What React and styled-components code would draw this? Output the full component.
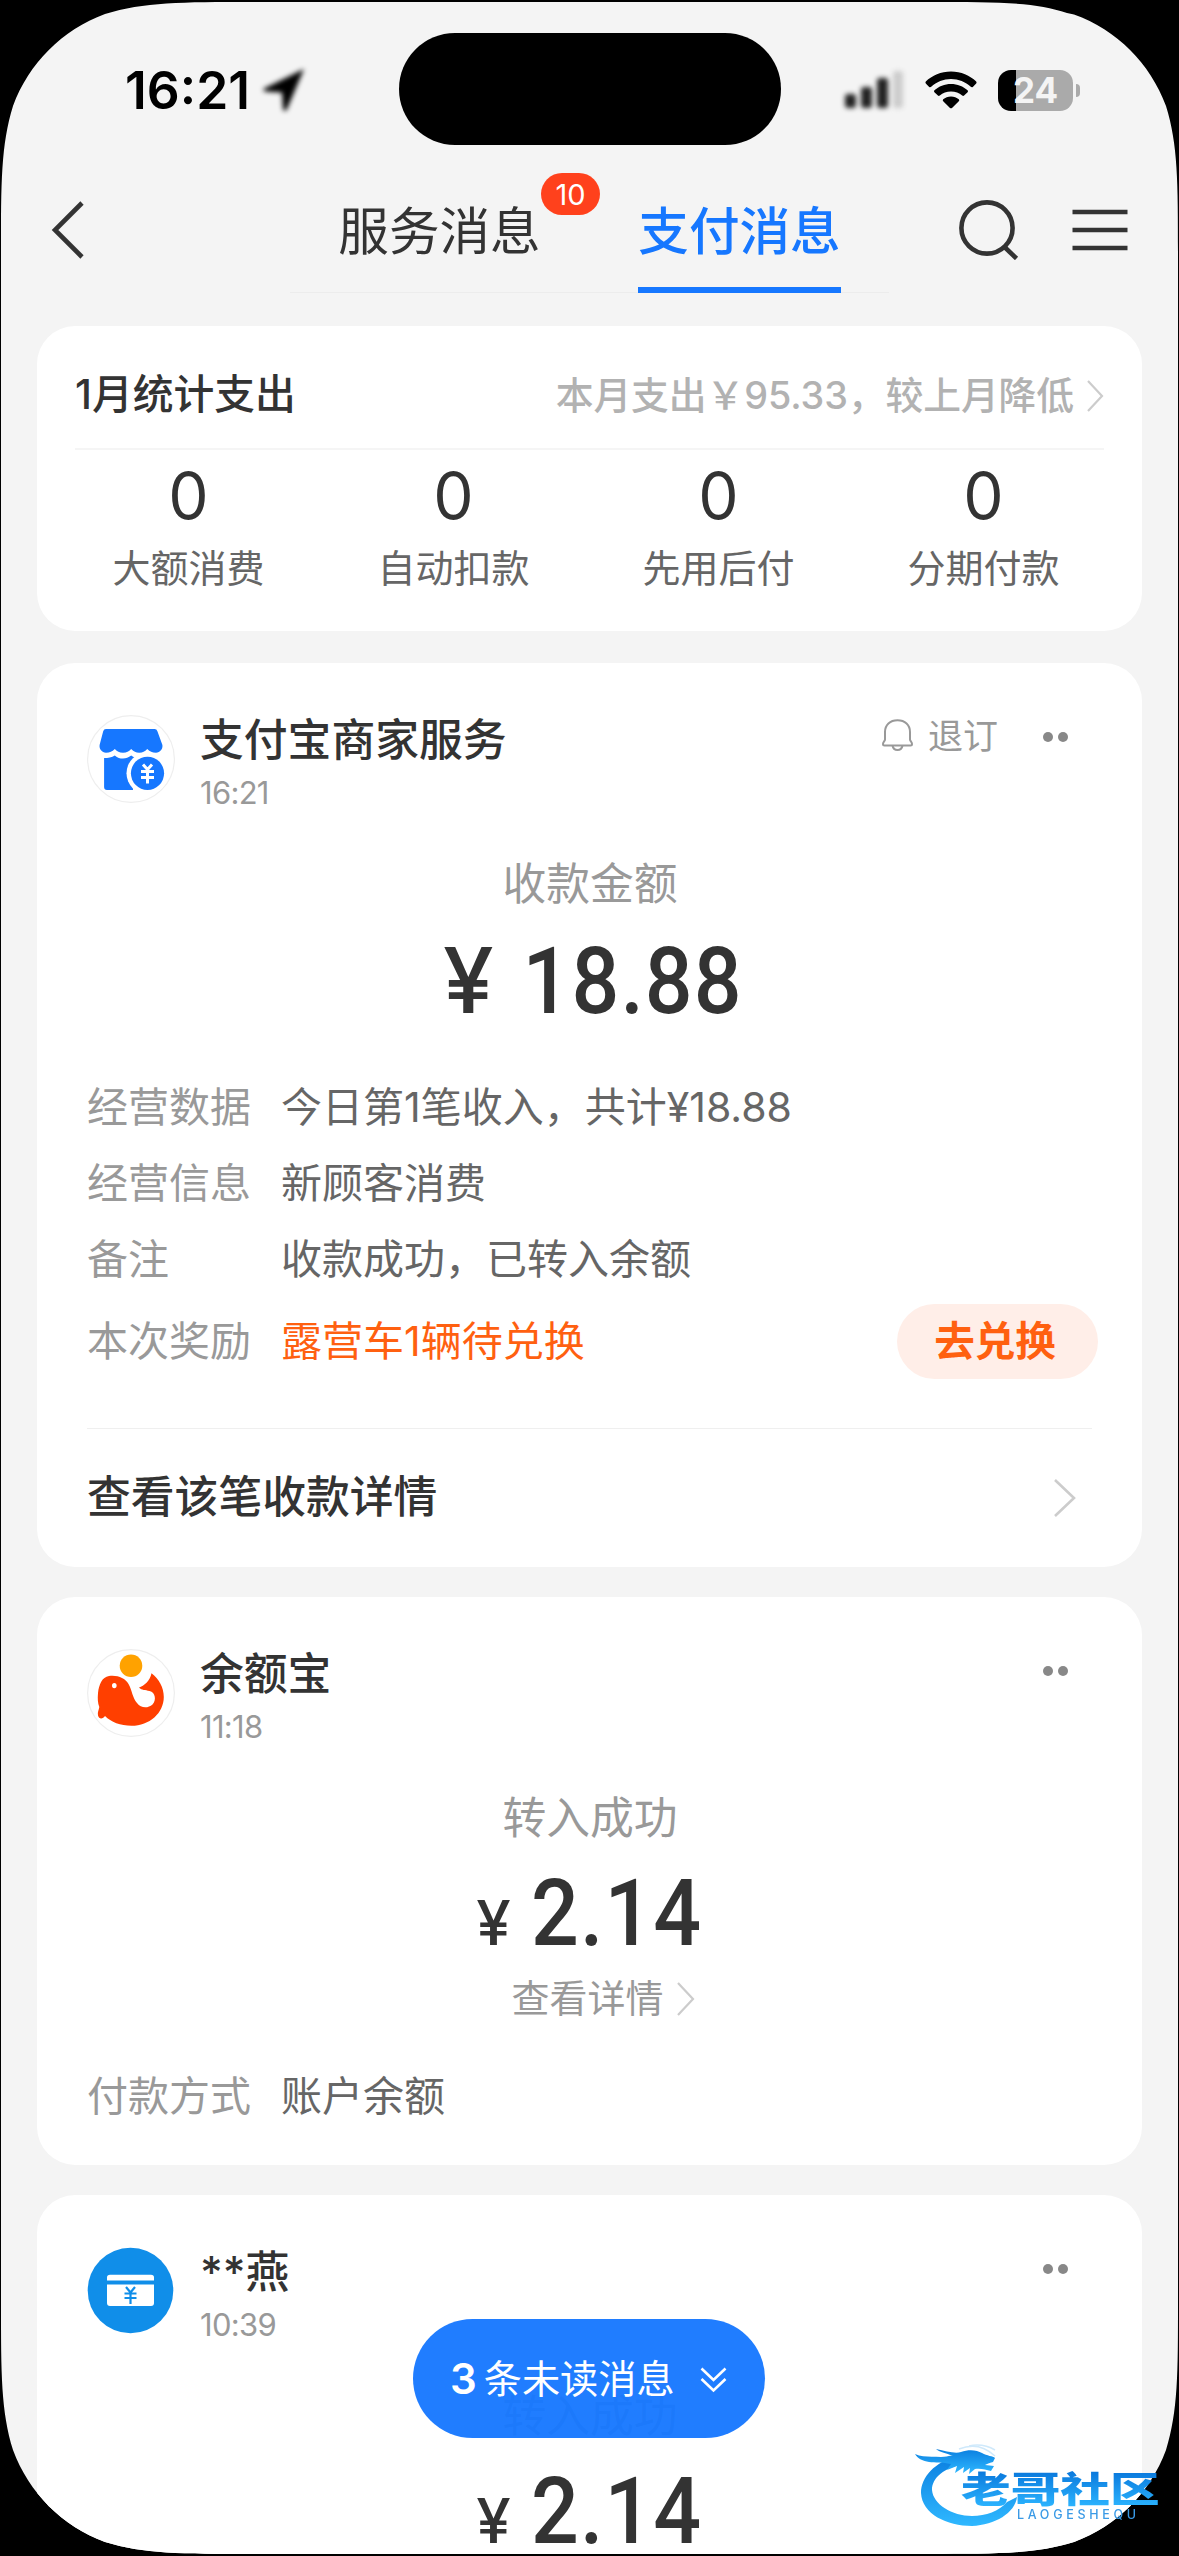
import React from "react";
import styled, { createGlobalStyle } from "styled-components";

const stats = [
  { label: "大额消费", value: 0 },
  { label: "自动扣款", value: 0 },
  { label: "先用后付", value: 0 },
  { label: "分期付款", value: 0 },
];

const App = () => {
  return (
    <Phone>
      <GlobalStyle />
      <Screen>
        <StatusBar>
          <Clock>
            16:21
            <LocationIcon />
          </Clock>
          <Island />
          <StatusIcons>
            <SignalIcon />
            <WifiIcon />
            <Battery>
              <BatteryBody>24</BatteryBody>
              <BatteryTip />
            </Battery>
          </StatusIcons>
        </StatusBar>

        <NavBar>
          <BackButton>
            <svg width="34" height="58" viewBox="0 0 34 58" fill="none">
              <path d="M31 2L4 29L31 56" stroke="#333" strokeWidth="4.6" />
            </svg>
          </BackButton>
          <Tabs>
            <Tab>
              服务消息
              <Badge>10</Badge>
            </Tab>
            <Tab $active>支付消息</Tab>
          </Tabs>
          <NavActions>
            <svg width="62" height="60" viewBox="0 0 62 60" fill="none" stroke="#333" strokeWidth="4.6">
              <circle cx="29" cy="28" r="25.6" />
              <path d="M46 46.500L58.500 58.500" />
            </svg>
            <svg width="56" height="42" viewBox="0 0 56 42" stroke="#333" strokeWidth="4.4">
              <path d="M0.500 3H55.500M0.500 21H55.500M0.500 39H55.500" />
            </svg>
          </NavActions>
        </NavBar>

        <Feed>
          <StatsCard>
            <StatsHeader>
              <StatsTitle>1月统计支出</StatsTitle>
              <StatsSummary>
                本月支出￥95.33，较上月降低
                <Chevron width={17} height={32} />
              </StatsSummary>
            </StatsHeader>
            <StatsGrid>
              {stats.map((stat) => (
                <div key={stat.label}>
                  <StatValue>{stat.value}</StatValue>
                  <StatLabel>{stat.label}</StatLabel>
                </div>
              ))}
            </StatsGrid>
          </StatsCard>

          <Card>
            <CardHeader icon={<ShopIcon />} name="支付宝商家服务" time="16:21" subscribable />
            <AmountLabel>收款金额</AmountLabel>
            <Amount $large>
              <Currency $large>¥</Currency>
              <AmountNumber>18.88</AmountNumber>
            </Amount>
            <Rows>
              <Row label="经营数据">今日第1笔收入，共计¥18.88</Row>
              <Row label="经营信息">新顾客消费</Row>
              <Row label="备注">收款成功，已转入余额</Row>
              <RewardRow>
                <RowLabel>本次奖励</RowLabel>
                <RewardText>露营车1辆待兑换</RewardText>
                <RewardButton>去兑换</RewardButton>
              </RewardRow>
            </Rows>
            <CardFooter>
              查看该笔收款详情
              <Chevron width={22} height={38} stroke={2.6} />
            </CardFooter>
          </Card>

          <Card>
            <CardHeader icon={<YuebaoIcon />} name="余额宝" time="11:18" />
            <AmountLabel>转入成功</AmountLabel>
            <Amount>
              <Currency>¥</Currency>
              <AmountNumber>2.14</AmountNumber>
            </Amount>
            <DetailLink>
              查看详情
              <Chevron width={18} height={34} />
            </DetailLink>
            <Rows>
              <Row label="付款方式">账户余额</Row>
            </Rows>
          </Card>

          <Card>
            <CardHeader icon={<TransferIcon />} name="**燕" time="10:39" />
            <AmountLabel>转入成功</AmountLabel>
            <Amount>
              <Currency>¥</Currency>
              <AmountNumber>2.14</AmountNumber>
            </Amount>
          </Card>
        </Feed>

        <UnreadPill>
          <b>3</b>
          条未读消息
          <svg width="27" height="26" viewBox="0 0 27 26" fill="none" stroke="#fff" strokeWidth="2.6">
            <path d="M1.500 1.500L13.500 13L25.500 1.500M1.500 12L13.500 23.500L25.500 12" />
          </svg>
        </UnreadPill>
      </Screen>
      <Watermark />
    </Phone>
  );
};

const CardHeader = ({ icon, name, time, subscribable }) => (
  <Header>
    {icon}
    <Sender>
      <SenderName>{name}</SenderName>
      <SenderTime>{time}</SenderTime>
    </Sender>
    <HeaderActions>
      {subscribable && (
        <Unsubscribe>
          <BellIcon />
          退订
        </Unsubscribe>
      )}
      <Dots>
        <i />
        <i />
      </Dots>
    </HeaderActions>
  </Header>
);

const Row = ({ label, children }) => (
  <RowBox>
    <RowLabel>{label}</RowLabel>
    <RowValue>{children}</RowValue>
  </RowBox>
);

const Chevron = ({ width, height, stroke = 2.2 }) => (
  <svg width={width} height={height} viewBox={`0 0 ${width} ${height}`} fill="none">
    <path
      d={`M1 1L${width - 2} ${height / 2}L1 ${height - 1}`}
      stroke="#ccc"
      strokeWidth={stroke}
    />
  </svg>
);

const LocationIcon = () => (
  <BlurredSvg width="44" height="46" viewBox="0 0 44 46">
    <path d="M42 2L2 21.500Q0 24 4 24.500L20 25.500L21 42Q22.500 46 25 42Z" />
  </BlurredSvg>
);

const SignalIcon = () => (
  <BlurredSvg width="60" height="40" viewBox="0 0 60 40">
    <rect x="1" y="24" width="11" height="14" rx="3" fill="#222" />
    <rect x="17" y="17" width="11" height="21" rx="3" fill="#222" />
    <rect x="33" y="8" width="11" height="30" rx="3" fill="#222" />
    <rect x="49" y="1" width="10" height="37" rx="3" fill="#ccc" />
  </BlurredSvg>
);

const WifiIcon = () => (
  <svg width="52" height="38" viewBox="0 0 52 38">
    <path d="M26 0.500C16 0.500 7 4.500 0.800 10.500Q0 11.500 0.800 12.400L4.200 15.900Q5.200 16.700 6.200 15.800C11.500 10.800 18.500 8 26 8S40.500 10.800 45.800 15.800Q46.800 16.700 47.800 15.900L51.200 12.400Q52 11.500 51.200 10.500C45 4.500 36 0.500 26 0.500Z" />
    <path d="M26 13C19.600 13 13.800 15.400 9.400 19.300Q8.500 20.300 9.400 21.200L12.900 24.600Q13.800 25.400 14.800 24.600C17.800 22 21.700 20.500 26 20.500S34.200 22 37.200 24.600Q38.200 25.400 39.100 24.600L42.600 21.200Q43.500 20.300 42.600 19.300C38.200 15.400 32.400 13 26 13Z" />
    <path d="M26 25.500C23 25.500 20.200 26.600 18.200 28.300Q17.200 29.300 18.200 30.200L25 36.900Q26 37.700 27 36.900L33.800 30.200Q34.800 29.300 33.800 28.300C31.800 26.600 29 25.500 26 25.500Z" />
  </svg>
);

const BellIcon = () => (
  <svg width="31" height="32" viewBox="0 0 31 32" fill="none" stroke="#999" strokeWidth="2">
    <path d="M3 20.500V13C3 6 8 1.300 15.500 1.300S28 6 28 13V20.500C28 22 30 23 30 25Q30 26.500 28.500 26.500H2.500Q1 26.500 1 25C1 23 3 22 3 20.500Z" />
    <path d="M10.500 26.500C11 29.500 13 31 15.500 31S20 29.500 20.500 26.500" />
  </svg>
);

const ShopIcon = () => (
  <Avatar viewBox="0 0 88 88">
    <circle cx="44" cy="44" r="43.400" fill="#fff" stroke="#eee" strokeWidth="1.2" />
    <g fill="#1677ff">
      <path d="M19 14H67.500Q69.800 14 70.400 16.200L75.400 30C76 34 73 37.700 69 37.700C65 37.700 63 36.500 60.300 34C57.500 36.500 56 37.700 52.300 37.700S47 36.500 44.200 34C41.500 36.500 40 37.700 36 37.700S30.500 36.500 27.800 34C25 36.500 23 37.700 19 37.700C15 37.700 12 34 12.600 30L16.200 16.200Q16.800 14 19 14Z" />
      <path d="M17.100 43C21 43 25 42.500 27.800 40.500C30.500 43 33 43.500 36 43.500S41.500 42.500 44.200 40.500L48 43L46 60V75H20Q17.100 75 17.100 72Z" />
    </g>
    <circle cx="60.500" cy="58.300" r="21" fill="#fff" />
    <circle cx="60.500" cy="58.300" r="16.600" fill="#1677ff" />
    <path
      d="M56 49.500L60.500 54.500L65 49.500M60.500 54.500V68.500M54 56.500H67M54 62.500H67"
      stroke="#fff"
      strokeWidth="3"
      fill="none"
    />
  </Avatar>
);

const YuebaoIcon = () => (
  <Avatar viewBox="0 0 88 88">
    <circle cx="44" cy="44" r="43.400" fill="#fff" stroke="#eee" strokeWidth="1.2" />
    <circle cx="44" cy="16.800" r="11.300" fill="#ffa200" />
    <path
      d="M22 27C31 26 38 29 41.500 35C45 41 45.500 49 50 54C54 59.500 61 59.500 65.500 55.500C69.500 51 68.500 43.500 62.500 42C58 40.800 55 41.500 52 38.500C57 37 63 32 64.500 24.300C72 30 76.800 38.500 76.800 48C76.800 64 62.500 76.800 44.500 76.800C33.500 76.800 24 73 18 67C16 70 12 70.500 11 66.500C10.300 63 12 61 12.300 58C10.800 54 10.500 50 11 44C12 35.500 15 28 22 27Z"
      fill="#ff3f00"
    />
    <ellipse cx="27.300" cy="36.600" rx="2.300" ry="2.700" fill="#fff" />
  </Avatar>
);

const TransferIcon = () => (
  <Avatar viewBox="0 0 88 88">
    <circle cx="43.500" cy="43.500" r="42.800" fill="#108ee9" />
    <path d="M20 33.500V30.500Q20 27.700 23 27.700H64Q67 27.700 67 30.500V33.500Z" fill="#fff" />
    <path d="M20 37.500H67V56Q67 59 64 59H23Q20 59 20 56Z" fill="#fff" />
    <path
      d="M39 40L43.500 45.500L48 40M43.500 45.500V57M37.500 46.500H49.500M37.500 51H49.500"
      stroke="#108ee9"
      strokeWidth="2.200"
      fill="none"
    />
  </Avatar>
);

const Watermark = () => (
  <WatermarkBox>
    <DragonSvg width="112" height="94" viewBox="0 0 112 94">
      <defs>
        <linearGradient id="dragon" x1="0" y1="0" x2="0" y2="1">
          <stop offset="0" stopColor="#0b7fe0" />
          <stop offset="1" stopColor="#2fb8ff" />
        </linearGradient>
      </defs>
      <g fill="url(#dragon)">
        <path d="M38 20C16 26 2 41 2 57C3 78 28 90 53 90C76 89 96 77 98 61L88 66C80 75 67 80 53 80C33 80 14 68 13 54C13 42 25 31 46 28Z" />
        <path d="M-4 18C4 22 12 20 22 21C28 21 30 19 34 20C27 17 20 16 17 13C27 15 36 18 42 16C50 13 58 14 63 17C68 20 74 20 76 22L74 26C70 27 68 28 66 29L75 30L72 35C67 34 62 32 56 33L50 38L51 32L44 37L45 31L36 37L38 30L28 34L32 28C24 26 16 27 10 26C4 25 -1 23 -4 18Z" />
      </g>
      <path d="M40 13Q60 5 76 20M50 10Q64 7 76 14" stroke="#cfe9fb" strokeWidth="1.5" fill="none" />
    </DragonSvg>
    <WatermarkText>
      <WatermarkTitle>老哥社区</WatermarkTitle>
      <WatermarkSub>LAOGESHEQU</WatermarkSub>
    </WatermarkText>
  </WatermarkBox>
);

const GlobalStyle = createGlobalStyle`
  * {
    box-sizing: border-box;
  }

  body {
    margin: 0;
    background: #000;
    font-family: Inter, "Noto Sans CJK SC", sans-serif;
    line-height: 1.2;
    color: #333;
  }

  svg {
    display: block;
    flex-shrink: 0;
  }
`;

const Phone = styled.div`
  position: relative;
  width: 1179px;
  height: 2556px;
  overflow: hidden;
  background: #000;
`;

// continuous-curvature corners of the display
const Screen = styled.div`
  position: relative;
  width: 1179px;
  height: 2556px;
  overflow: hidden;
  background: #f4f4f4;
  clip-path: path(
    "M253 2L926 2C998 2 1035 2 1067 13L1074 14.500C1117 30 1150 63 1166 106C1178 145 1178 182 1178 254L1178 2302C1178 2374 1178 2411 1166 2450C1150 2493 1117 2526 1074 2542C1035 2554 998 2554 926 2554L253 2554C181 2554 144 2554 105 2542C62 2526 29 2493 13 2450C1 2411 1 2374 1 2302L1 254C1 182 1 145 13 106C29 63 62 30 105 14C144 2 181 2 253 2Z"
  );
`;

const StatusBar = styled.div`
  display: grid;
  grid-template-columns: 399px 382px 1fr;
  align-items: center;
  height: 178px;
`;

const Clock = styled.div`
  display: flex;
  align-items: center;
  gap: 12px;
  padding-left: 125px;
  padding-top: 2px;
  font-size: 51.5px;
  font-weight: 600;
  letter-spacing: 0;
  line-height: 60px;
  color: #000;
`;

const BlurredSvg = styled.svg`
  overflow: visible;
  filter: blur(2.8px);
`;

const Island = styled.div`
  height: 112px;
  border-radius: 56px;
  background: #000;
`;

const StatusIcons = styled.div`
  display: flex;
  align-items: center;
  padding: 2px 0 0 63px;
  gap: 21px;
`;

const Battery = styled.div`
  display: flex;
  align-items: center;
  gap: 3px;
`;

const BatteryBody = styled.div`
  width: 75px;
  height: 41px;
  border-radius: 13px;
  padding-left: 15px;
  background: linear-gradient(to right, #000 18px, #aaa 18px);
  color: #f4f4f4;
  font-size: 35px;
  font-weight: 700;
  line-height: 41px;
`;

const BatteryTip = styled.div`
  width: 4px;
  height: 13px;
  border-radius: 0 4px 4px 0;
  background: #aaa;
`;

const NavBar = styled.div`
  display: grid;
  grid-template-columns: 290px 599px 290px;
  height: 115px;
`;

const BackButton = styled.div`
  padding: 23px 0 0 51px;
`;

const Tabs = styled.div`
  display: flex;
  justify-content: space-between;
  padding: 0 48px;
  box-shadow: inset 0 -1px #ececec;
`;

const Tab = styled.div`
  position: relative;
  width: 203px;
  height: 115px;
  border-bottom: 6px solid ${({ $active }) => ($active ? "#1677ff" : "transparent")};
  color: ${({ $active }) => ($active ? "#1677ff" : "#333")};
  font-size: 50.6px;
  font-weight: ${({ $active }) => ($active ? 500 : 400)};
  line-height: 107px;
  text-align: center;
  white-space: nowrap;
`;

const Badge = styled.span`
  position: absolute;
  left: 203px;
  top: -5px;
  width: 59px;
  height: 42px;
  border-radius: 21px;
  background: #ff411c;
  color: #fff;
  font-size: 29px;
  font-weight: 400;
  line-height: 43px;
`;

const NavActions = styled.div`
  display: flex;
  align-items: center;
  gap: 52px;
  height: 103px;
  padding-left: 69px;
`;

const Feed = styled.div`
  display: flex;
  flex-direction: column;
  gap: 30px;
  padding: 33px 37px 0;
`;

const Card = styled.div`
  display: flex;
  flex-direction: column;
  flex-shrink: 0;
  padding: 50px 44px 30px 50px;
  border-radius: 38px;
  background: #fff;
`;

const StatsCard = styled(Card)`
  height: 305px;
  margin-bottom: 2px;
  padding: 0 38px;
`;

const StatsHeader = styled.div`
  display: flex;
  align-items: center;
  justify-content: space-between;
  height: 124px;
  padding-top: 14px;
  border-bottom: 2px solid #f5f5f5;
`;

const StatsTitle = styled.div`
  font-size: 40.8px;
  font-weight: 500;
`;

const StatsSummary = styled.div`
  display: flex;
  align-items: center;
  gap: 13px;
  padding-top: 3px;
  color: #b2b2b2;
  font-size: 37.8px;
  font-weight: 500;
  letter-spacing: -0.1px;
  white-space: nowrap;
`;

const StatsGrid = styled.div`
  display: grid;
  grid-template-columns: repeat(4, 265px);
  margin: 7px -19px 0;
  text-align: center;
`;

const StatValue = styled.div`
  font-size: 64px;
  line-height: 77px;
`;

const StatLabel = styled.div`
  margin-top: 4px;
  color: #666;
  font-size: 38px;
  line-height: 60px;
`;

const Header = styled.div`
  display: flex;
  height: 143px;
`;

const Avatar = styled.svg`
  width: 88px;
  height: 88px;
  margin-top: 2px;
`;

const Sender = styled.div`
  margin: 2px 0 0 25px;
`;

const SenderName = styled.div`
  font-size: 43.8px;
  font-weight: 500;
  line-height: 52px;
`;

const SenderTime = styled.div`
  margin-top: 6px;
  color: #999;
  font-size: 31px;
  line-height: 40px;
  letter-spacing: -0.7px;
`;

const HeaderActions = styled.div`
  display: flex;
  align-items: center;
  gap: 45px;
  height: 48px;
  margin-left: auto;
  padding-right: 30px;
`;

const Unsubscribe = styled.div`
  display: flex;
  align-items: center;
  gap: 15px;
  margin-top: -3px;
  color: #999;
  font-size: 35px;

  svg {
    margin-top: -2px;
  }
`;

const Dots = styled.div`
  display: flex;
  gap: 5px;

  i {
    width: 10px;
    height: 10px;
    border-radius: 50%;
    background: #888;
  }
`;

const AmountLabel = styled.div`
  padding-right: 5px;
  color: #999;
  font-size: 43.8px;
  line-height: 58px;
  text-align: center;
`;

const Amount = styled.div`
  display: flex;
  align-items: baseline;
  justify-content: center;
  height: 110px;
  margin-top: 11px;
  padding-left: ${({ $large }) => ($large ? "12px" : "2px")};
  font-family: Roboto, sans-serif;
  font-size: 93px;
  font-weight: 500;
  line-height: 110px;
`;

const Currency = styled.span`
  margin-right: ${({ $large }) => ($large ? "17px" : "11px")};
  font-family: Inter, sans-serif;
  font-size: ${({ $large }) => ($large ? "91px" : "62px")};
`;

// slightly condensed numerals
const AmountNumber = styled.span`
  letter-spacing: 1.2px;
  transform: scaleX(0.905);
`;

const DetailLink = styled.div`
  display: flex;
  align-items: center;
  justify-content: center;
  gap: 13px;
  height: 50px;
  margin-top: 5px;
  padding-left: 25px;
  padding-right: 4px;
  color: #999;
  font-size: 38px;
`;

const Rows = styled.div`
  margin-top: 35px;
  font-size: 41px;
`;

const RowBox = styled.div`
  display: flex;
  align-items: center;
  height: 76px;
`;

const RewardRow = styled(RowBox)`
  height: 87px;
`;

const RowLabel = styled.div`
  width: 194px;
  color: #999;
`;

const RowValue = styled.div`
  color: #666;
`;

const RewardText = styled(RowValue)`
  color: #ff6010;
`;

const RewardButton = styled.div`
  width: 201px;
  height: 75px;
  margin-left: auto;
  padding-right: 5px;
  border-radius: 38px;
  background: #ffeee8;
  color: #ff6010;
  font-weight: 600;
  font-size: 40.6px;
  line-height: 76px;
  text-align: center;
`;

const CardFooter = styled.div`
  display: flex;
  align-items: center;
  justify-content: space-between;
  height: 139px;
  margin: 43px 6px -30px 0;
  padding-right: 16px;
  border-top: 1px solid #efefef;
  font-size: 43.8px;
  font-weight: 500;
`;

const UnreadPill = styled.div`
  position: absolute;
  left: 413px;
  top: 2319px;
  display: flex;
  align-items: center;
  width: 352px;
  height: 119px;
  padding: 2px 0 0 37px;
  border-radius: 60px;
  background: rgba(22, 119, 255, 0.955);
  color: #fff;
  font-size: 38.2px;

  b {
    margin-right: 7px;
    font-size: 42px;
    font-weight: 600;
  }

  svg {
    margin-left: 25px;
  }
`;

const WatermarkBox = styled.div`
  position: absolute;
  left: 919px;
  top: 2436px;
  display: flex;
`;

const DragonSvg = styled.svg`
  overflow: visible;
  filter: blur(0.7px);
`;

const WatermarkText = styled.div`
  margin: 35px 0 0 -70px;
  filter: blur(0.7px);
`;

const WatermarkTitle = styled.div`
  width: 145px;
  height: 36px;
  background: linear-gradient(#0a78dc, #2bb4ff);
  background-clip: text;
  -webkit-background-clip: text;
  color: transparent;
  font-size: 36px;
  font-weight: 900;
  line-height: 38px;
  white-space: nowrap;
  transform: scaleX(1.38);
  transform-origin: left;
`;

const WatermarkSub = styled.div`
  margin: 2px 0 0 56px;
  color: #3a9ae6;
  font-size: 12.5px;
  font-weight: 500;
  line-height: 12px;
  letter-spacing: 3.7px;
`;

export default App;
